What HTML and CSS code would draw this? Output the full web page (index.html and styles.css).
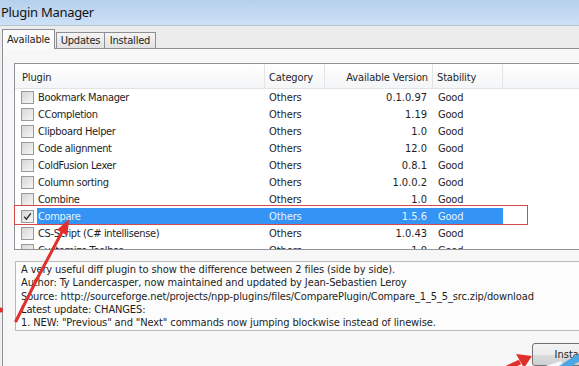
FILE: index.html
```html
<!DOCTYPE html>
<html>
<head>
<meta charset="utf-8">
<link rel="stylesheet" href="styles.css">
</head>
<body>
<div class="window">
  <div class="titlebar">Plugin Manager</div>
  <div class="tabs">
    <div class="tab tab-available active">Available</div>
    <div class="tab tab-updates">Updates</div>
    <div class="tab tab-installed">Installed</div>
  </div>
  <div class="panel">
    <div class="list">
      <div class="hdr">
        <div class="c-plugin">Plugin</div>
        <div class="c-cat">Category</div>
        <div class="c-ver">Available Version</div>
        <div class="c-stab">Stability</div>
        <div class="c-rest"></div>
      </div>
      <div class="row"><div class="c-check"><span class="box"></span></div><div class="c-name">Bookmark Manager</div><div class="c-cat">Others</div><div class="c-ver">0.1.0.97</div><div class="c-stab">Good</div></div>
      <div class="row"><div class="c-check"><span class="box"></span></div><div class="c-name">CCompletion</div><div class="c-cat">Others</div><div class="c-ver">1.19</div><div class="c-stab">Good</div></div>
      <div class="row"><div class="c-check"><span class="box"></span></div><div class="c-name">Clipboard Helper</div><div class="c-cat">Others</div><div class="c-ver">1.0</div><div class="c-stab">Good</div></div>
      <div class="row"><div class="c-check"><span class="box"></span></div><div class="c-name">Code alignment</div><div class="c-cat">Others</div><div class="c-ver">12.0</div><div class="c-stab">Good</div></div>
      <div class="row"><div class="c-check"><span class="box"></span></div><div class="c-name">ColdFusion Lexer</div><div class="c-cat">Others</div><div class="c-ver">0.8.1</div><div class="c-stab">Good</div></div>
      <div class="row"><div class="c-check"><span class="box"></span></div><div class="c-name">Column sorting</div><div class="c-cat">Others</div><div class="c-ver">1.0.0.2</div><div class="c-stab">Good</div></div>
      <div class="row"><div class="c-check"><span class="box"></span></div><div class="c-name">Combine</div><div class="c-cat">Others</div><div class="c-ver">1.0</div><div class="c-stab">Good</div></div>
      <div class="row selected"><div class="c-check"><span class="box checked"><svg viewBox="0 0 11 11" width="11" height="11"><path d="M2.2 5.6 L4.4 8.2 L8.8 2.4" fill="none" stroke="#2b2b2b" stroke-width="1.4"/></svg></span></div><div class="c-name">Compare</div><div class="c-cat">Others</div><div class="c-ver">1.5.6</div><div class="c-stab">Good</div></div>
      <div class="row"><div class="c-check"><span class="box"></span></div><div class="c-name">CS-Script (C# intellisense)</div><div class="c-cat">Others</div><div class="c-ver">1.0.43</div><div class="c-stab">Good</div></div>
      <div class="row"><div class="c-check"><span class="box"></span></div><div class="c-name">Customize Toolbar</div><div class="c-cat">Others</div><div class="c-ver">1.0</div><div class="c-stab">Good</div></div>
    </div>
    <div class="desc">
      <div>A very useful diff plugin to show the difference between 2 files (side by side).</div>
      <div>Author: Ty Landercasper, now maintained and updated by Jean-Sebastien Leroy</div>
      <div>Source: http://sourceforge.net/projects/npp-plugins/files/ComparePlugin/Compare_1_5_5_src.zip/download</div>
      <div>Latest update: CHANGES:</div>
      <div>1. NEW: "Previous" and "Next" commands now jumping blockwise instead of linewise.</div>
    </div>
    <div class="actions">
      <button class="btn">Install</button>
    </div>
  </div>
</div>
<div class="highlight-box"></div>
<svg class="annot" width="579" height="366" viewBox="0 0 579 366">
  <circle cx="0.5" cy="310" r="2.5" fill="#e0302c"/>
  <path d="M16 321 L37 279 L62 232" fill="none" stroke="#e0302c" stroke-width="3" stroke-linecap="round"/>
  <polygon points="69,219 67.5,235.5 57,230" fill="#e0302c"/>
  <path d="M490 376 L520 362" fill="none" stroke="#e0302c" stroke-width="5"/>
  <polygon points="532,356 524,368 516,354" fill="#e0302c"/>
  <path d="M536 371 L562 363" fill="none" stroke="#f4f8fb" stroke-width="4"/>
  <path d="M556 373 Q 568 363 588 353" fill="none" stroke="#4aa6e4" stroke-width="7"/>
</svg>
</body>
</html>
```

FILE: styles.css
```css
html, body {
  margin: 0;
  padding: 0;
}
body {
  width: 579px;
  height: 366px;
  overflow: hidden;
  position: relative;
  background: #f0f0f0;
  font-family: "DejaVu Sans Condensed", "DejaVu Sans", sans-serif;
  font-size: 11px;
  color: #1e1e1e;
}
.window {
  width: 680px;
}
.titlebar {
  height: 25px;
  border-bottom: 1px solid #b3c3d4;
  background: linear-gradient(#b5cfec, #cde1f6);
  font-family: "Noto Sans", sans-serif;
  font-size: 13px;
  letter-spacing: -0.3px;
  line-height: 25px;
  padding-left: 1px;
  color: #141414;
}
.tabs {
  display: flex;
  align-items: flex-end;
  height: 19px;
  padding: 3px 0 0 2px;
  background: #ececec;
  position: relative;
  z-index: 2;
}
.tab {
  box-sizing: border-box;
  height: 16px;
  border: 1px solid #8c8f96;
  border-bottom: none;
  background: linear-gradient(#f4f4f4, #e2e2e2);
  text-align: center;
  line-height: 15px;
  color: #1e1e1e;
  letter-spacing: -0.2px;
}
.tab-available { width: 53px; }
.tab-updates { width: 49px; margin-left: 1px; }
.tab-installed { width: 52px; margin-left: -1px; }
.tab.active {
  height: 20px;
  margin-bottom: -1px;
  background: #fbfbfb;
  line-height: 17px;
  padding-top: 1px;
}
.panel {
  margin-left: 2px;
  border: 1px solid #8c8f96;
  background: #f7f7f7;
  padding: 14px 0 0 11px;
  height: 400px;
}
.list {
  height: 185px;
  border: 1px solid #8f9296;
  background: #fff;
  overflow: hidden;
}
.hdr {
  display: flex;
  box-sizing: border-box;
  height: 25px;
  border-bottom: 1px solid #e3e3e3;
  background: linear-gradient(#ffffff, #f4f5f7);
  color: #262626;
  line-height: 23px;
  letter-spacing: -0.15px;
}
.hdr > div {
  box-sizing: border-box;
  border-right: 1px solid #e4e4e4;
  padding-top: 2px;
}
.hdr .c-plugin { width: 250px; padding-left: 7px; }
.hdr .c-cat { width: 60px; padding-left: 4px; }
.hdr .c-ver { width: 108px; text-align: right; padding-right: 4px; }
.hdr .c-stab { width: 70px; padding-left: 4px; }
.hdr .c-rest { flex: 1; }
.row {
  display: flex;
  height: 17px;
  line-height: 17px;
  white-space: nowrap;
}
.row > div { box-sizing: border-box; }
.c-check {
  width: 22px;
  padding: 2px 0 0 6px;
}
.box {
  display: block;
  box-sizing: border-box;
  width: 13px;
  height: 13px;
  border: 1px solid #9a9a9a;
  background: linear-gradient(135deg, #d6d6d6, #f6f6f6);
}
.box svg { display: block; margin: 0; }
.row .c-name { width: 228px; padding-left: 1px; letter-spacing: -0.35px; }
.row .c-cat { width: 60px; padding-left: 4px; letter-spacing: -0.1px; }
.row .c-ver { width: 108px; text-align: right; padding-right: 6px; }
.row .c-stab { width: 70px; padding-left: 5px; letter-spacing: -0.2px; }
.row.selected .c-name,
.row.selected .c-cat,
.row.selected .c-ver,
.row.selected .c-stab {
  background: #3394f5;
  color: #e6f3ff;
}
.desc {
  margin: 11px 0 0 1px;
  box-sizing: border-box;
  height: 70px;
  border: 1px solid #b9b9b9;
  border-right: none;
  background: #fcfcfc;
  padding: 1px 0 0 5px;
  line-height: 13.25px;
  white-space: nowrap;
  color: #1e1e1e;
  letter-spacing: -0.12px;
}
.actions {
  display: flex;
  padding: 12px 0 0 518px;
}
.btn {
  box-sizing: border-box;
  width: 75px;
  height: 23px;
  border: 1px solid #707070;
  border-radius: 3px;
  background: linear-gradient(#f3f3f3 0%, #ebebeb 50%, #dddddd 51%, #cfcfcf 100%);
  font-family: "DejaVu Sans Condensed", "DejaVu Sans", sans-serif;
  font-size: 11px;
  color: #1e1e1e;
  padding: 0;
}
.highlight-box {
  position: absolute;
  left: 14px;
  top: 205px;
  width: 512px;
  height: 18px;
  border: 1.5px solid #d44a4a;
}
.annot {
  position: absolute;
  left: 0;
  top: 0;
  pointer-events: none;
}
```
